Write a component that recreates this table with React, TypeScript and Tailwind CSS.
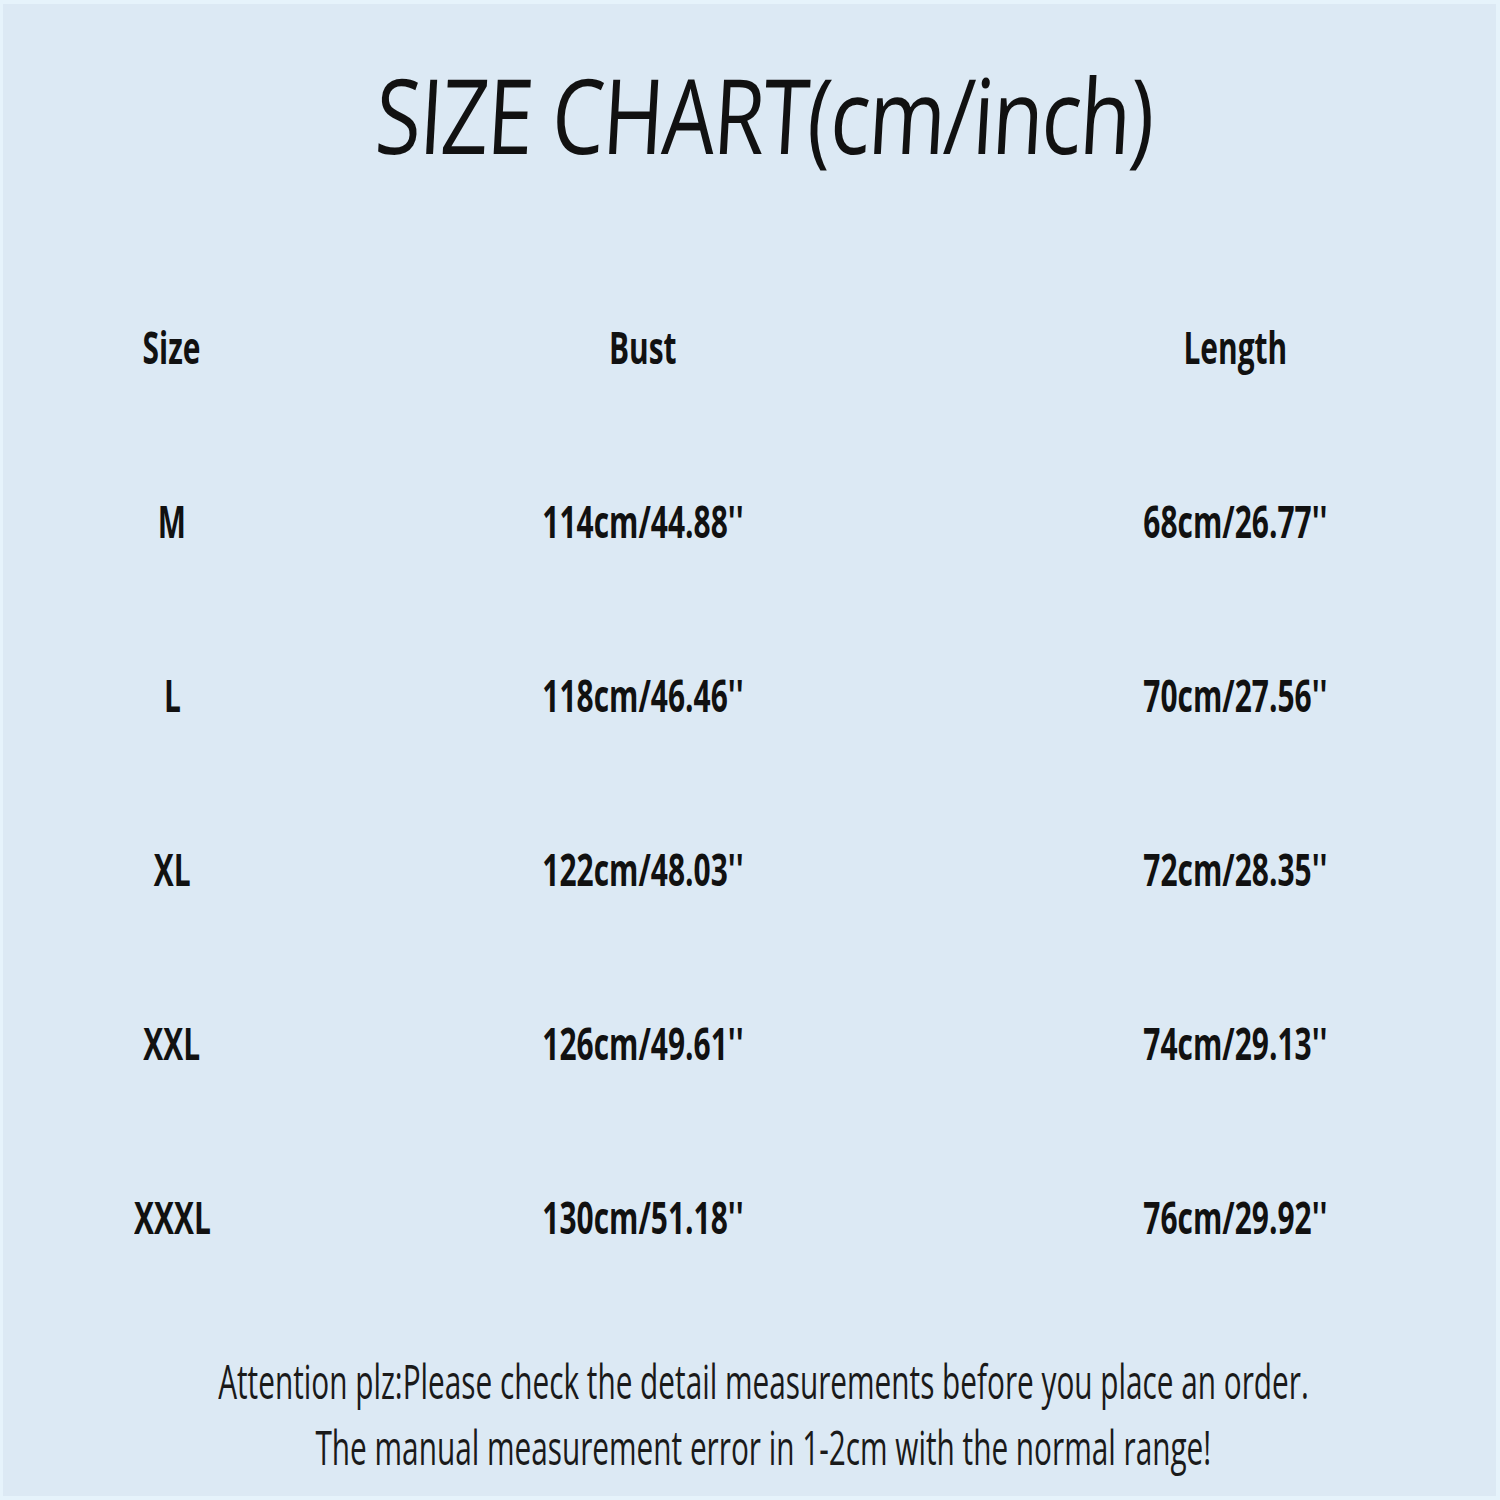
const rows = [
  ['M', '114cm/44.88\'\'', '68cm/26.77\'\''],
  ['L', '118cm/46.46\'\'', '70cm/27.56\'\''],
  ['XL', '122cm/48.03\'\'', '72cm/28.35\'\''],
  ['XXL', '126cm/49.61\'\'', '74cm/29.13\'\''],
  ['XXXL', '130cm/51.18\'\'', '76cm/29.92\'\''],
]

function Row({ cells }: { cells: string[] }) {
  return (
    <div className="grid grid-cols-[200px_742px_442px] h-[174px] items-center">
      {cells.map((c, i) => (
        <div key={i} className="text-center">
          <span className="inline-block whitespace-nowrap [transform:scaleX(0.68)]">{c}</span>
        </div>
      ))}
    </div>
  )
}

export default function App() {
  return (
    <div className="w-[1500px] h-[1500px] bg-[#e6f3fb] pt-[4px] pl-[3px] pr-[4px] pb-[4px]">
      <div className="w-full h-full bg-[#dce9f4] flex flex-col text-[#111] overflow-hidden">
        {/* Title */}
        <div className="shrink-0 h-[220px] flex items-center justify-center pl-[30px]">
          <h1 className="text-[104px] leading-none tracking-[-2px] font-normal whitespace-nowrap [font-family:'Open_Sans','DejaVu_Sans',sans-serif] [transform:scaleX(0.8)_skewX(-4deg)]">
            SIZE CHART(cm/inch)
          </h1>
        </div>

        {/* Table */}
        <div className="shrink-0 pl-[69px] pt-[36px] font-bold text-[44px] leading-none [font-family:'Open_Sans',sans-serif]">
          <Row cells={['Size', 'Bust', 'Length']} />
          {rows.map((r) => (
            <Row key={r[0]} cells={r} />
          ))}
        </div>

        {/* Notes */}
        <div className="shrink-0 mt-[44px] pl-[28px] flex flex-col items-center text-[48px] leading-[66px] [font-family:'Open_Sans',sans-serif] text-[#1a1a1a]">
          <p className="whitespace-nowrap [transform:scaleX(0.62)]">
            Attention plz:Please check the detail measurements before you place an order.
          </p>
          <p className="whitespace-nowrap [transform:scaleX(0.62)]">
            The manual measurement error in 1-2cm with the normal range!
          </p>
        </div>
      </div>
    </div>
  )
}
